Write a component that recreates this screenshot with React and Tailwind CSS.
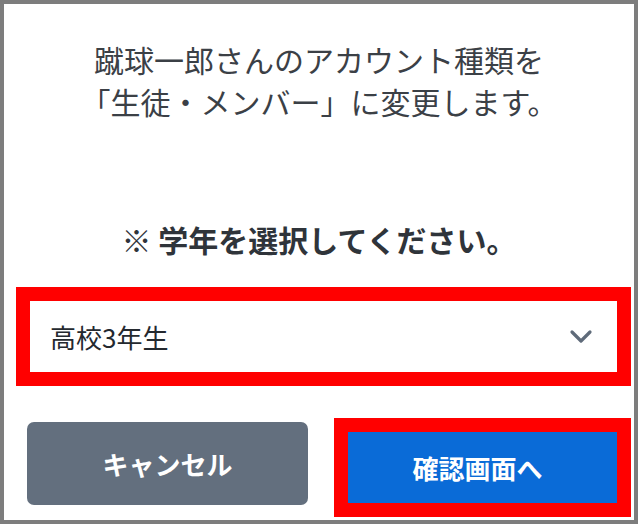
import React, { useState } from "react";

const font = { fontFamily: '"Noto Sans CJK JP", "Noto Sans", sans-serif' };

const ChevronDown = () => (
  <svg width="24" height="15" viewBox="0 0 24 15" fill="none">
    <path d="M3 3 L12 12 L21 3" stroke="#5f6b7a" strokeWidth="3.2" strokeLinecap="round" strokeLinejoin="round" />
  </svg>
);

export default function App() {
  const [grade] = useState("高校3年生");

  return (
    <div className="w-[642px] h-[528px] bg-white" style={font}>
      <div className="w-[638px] h-[524px] border-4 border-[#7d7d7d] bg-white flex flex-col">
        {/* message */}
        <div className="pt-[34px] text-center text-[30px] leading-[42px] text-[#3b4046]">
          <p>蹴球一郎さんのアカウント種類を</p>
          <p>「生徒・メンバー」に変更します。</p>
        </div>

        <p className="mt-[96px] text-center text-[30px] leading-[42px] font-bold text-[#2f343a]">
          ※ 学年を選択してください。
        </p>

        {/* grade select */}
        <div className="mt-[27px] ml-[12px] w-[615px] h-[99px] border-[14px] border-[#ff0000]">
          <div className="h-full bg-white flex items-center justify-between pl-[20px] pr-[24px]">
            <span className="text-[26px] text-[#24292f]">{grade}</span>
            <ChevronDown />
          </div>
        </div>

        {/* buttons */}
        <div className="mt-[32px] flex items-start">
          <button className="mt-[4px] ml-[23px] w-[281px] h-[83px] rounded-[7px] bg-[#636f7e] text-white text-[26px] font-bold">
            キャンセル
          </button>
          <div className="ml-[26px] w-[297px] h-[99px] border-[14px] border-[#ff0000]">
            <button className="w-full h-full pr-[10px] bg-[#0a6bd7] text-white text-[26px] font-bold">
              確認画面へ
            </button>
          </div>
        </div>
      </div>
    </div>
  );
}
